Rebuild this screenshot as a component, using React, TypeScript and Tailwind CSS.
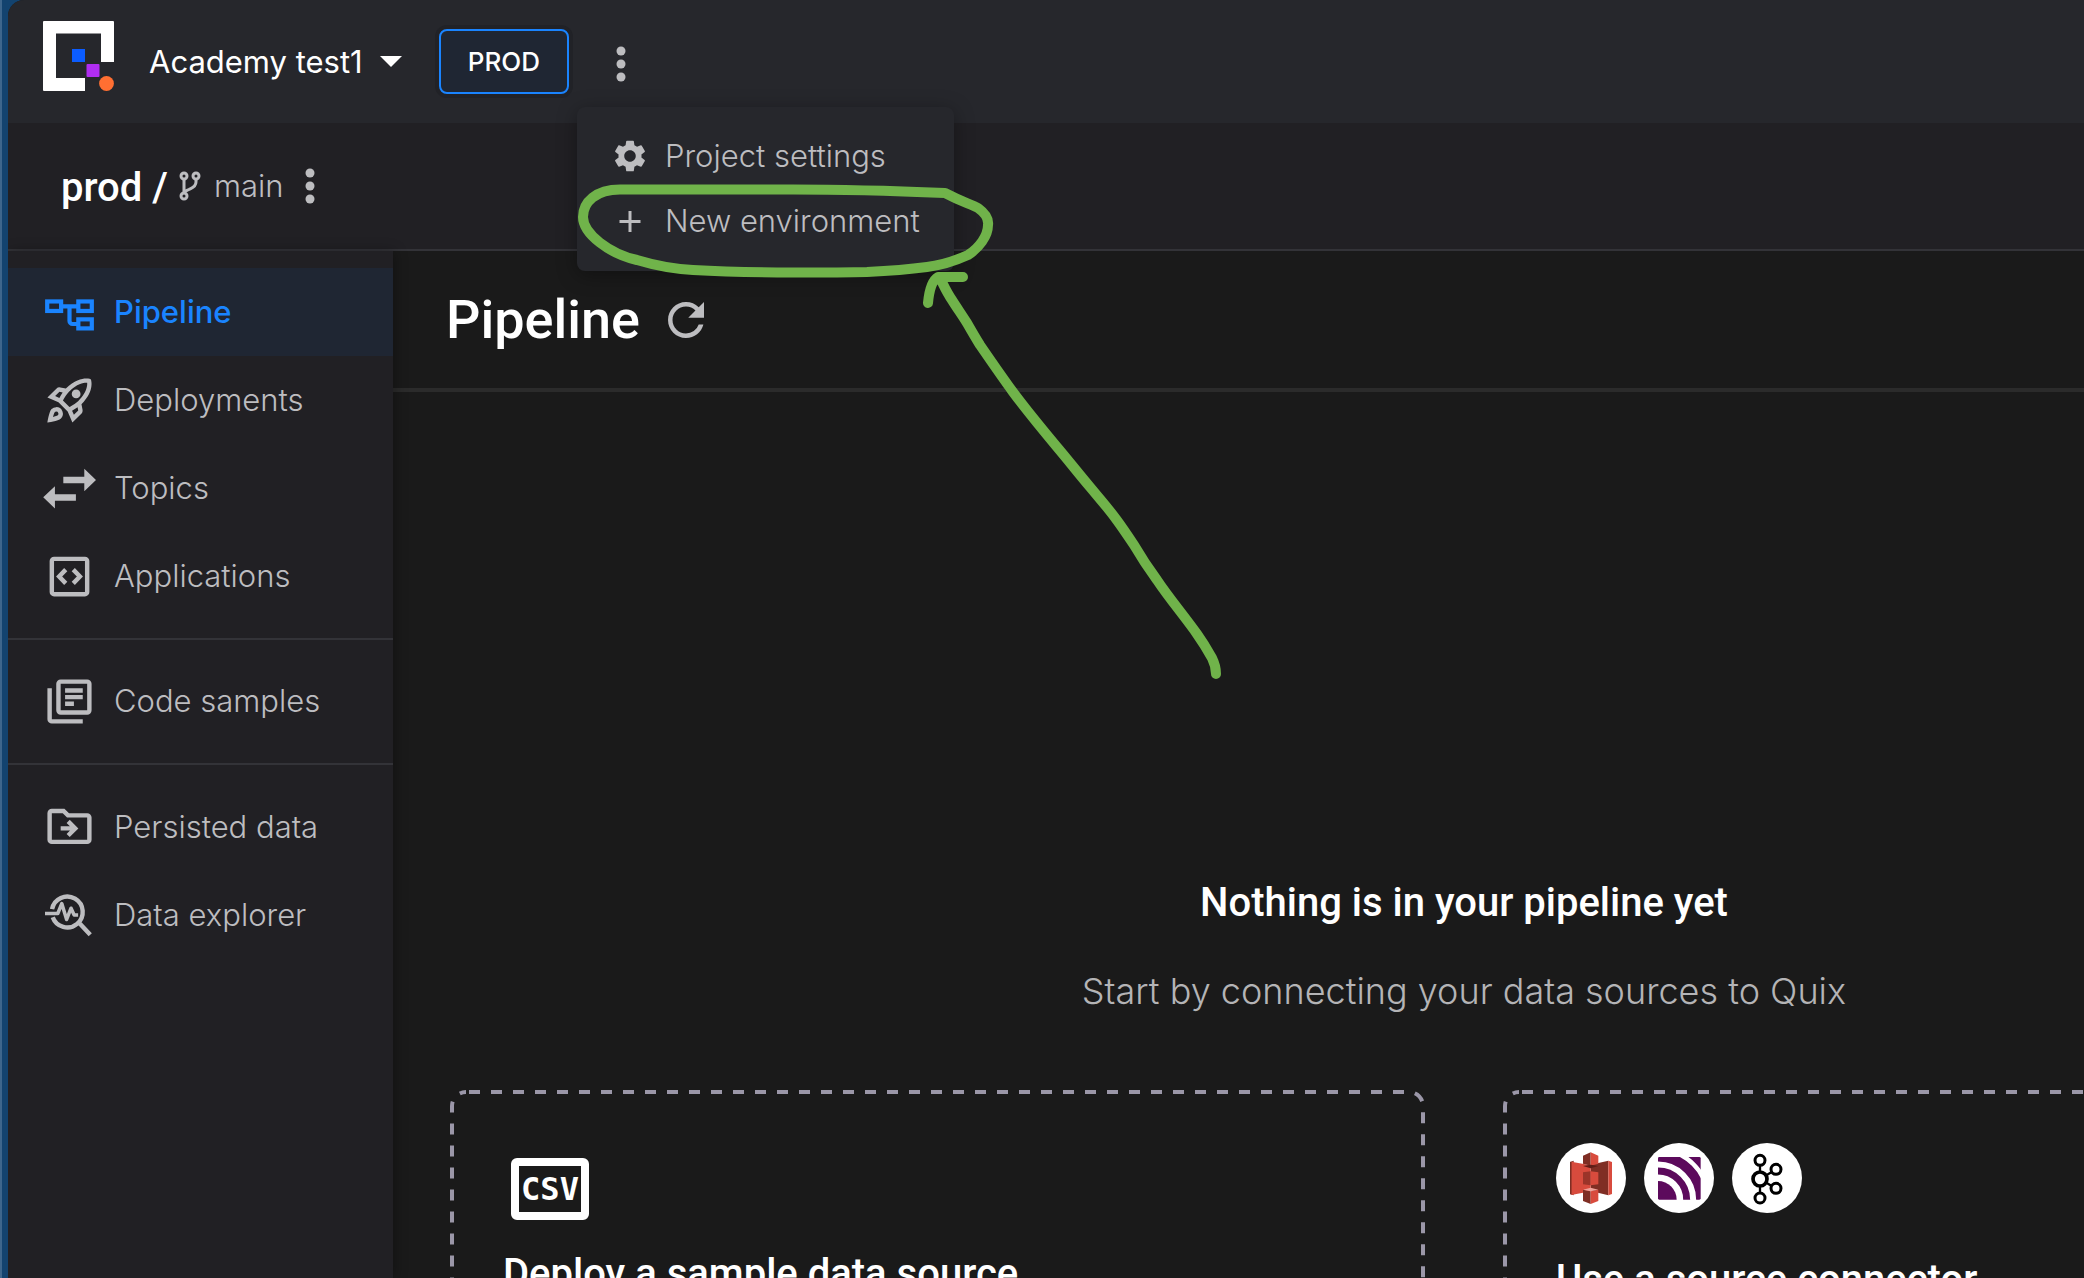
import type { ReactNode } from "react";

function Logo() {
  return (
    <svg viewBox="0 0 71 70" className="mb-[11px] h-[70px] w-[71px] shrink-0" role="img" aria-label="Quix">
      <path
        fill="#fff"
        d="M1 0H70a1 1 0 0 1 1 1V41H58V12.5H13V57H42V70H1a1 1 0 0 1-1-1V1a1 1 0 0 1 1-1z"
      />
      <rect x="29" y="28" width="13" height="13" fill="#0b5cff" />
      <rect x="43.5" y="43" width="13" height="13" rx="1" fill="#b02df2" />
      <circle cx="63.5" cy="62.5" r="7.4" fill="#ff6f32" />
    </svg>
  );
}

function Kebab() {
  return (
    <svg viewBox="0 0 10 36" className="h-9 w-2.5" fill="#bdbdc0" aria-hidden="true">
      <circle cx="5" cy="5" r="4.5" />
      <circle cx="5" cy="18" r="4.5" />
      <circle cx="5" cy="31" r="4.5" />
    </svg>
  );
}

function Icon({ children }: { children: ReactNode }) {
  return (
    <svg viewBox="0 0 24 24" className="size-[53px] shrink-0" fill="none" stroke="currentColor" strokeWidth="2" aria-hidden="true">
      {children}
    </svg>
  );
}

const icons = {
  pipeline: (
    <Icon>
      <g strokeWidth="1.9">
        <rect x="1.9" y="7" width="6.3" height="4.3" />
        <rect x="16" y="7" width="6.1" height="4.3" />
        <rect x="16" y="15.1" width="6.1" height="4.1" />
        <path d="M8.5 9.2H16M12 9.2v6.6a1.4 1.4 0 0 0 1.4 1.4H16" />
      </g>
    </Icon>
  ),
  rocket: (
    <Icon>
      <path
        fill="currentColor"
        stroke="none"
        fillRule="evenodd"
        d="M6 15c-.83 0-1.58.34-2.12.88C2.7 17.06 2 22 2 22s4.94-.7 6.12-1.88A2.996 2.996 0 0 0 6 15zm.71 3.71c-.28.28-2.17.76-2.17.76s.47-1.88.76-2.17c.17-.19.42-.3.7-.3a1.003 1.003 0 0 1 .71 1.71zM17.42 13.65c6.36-6.36 4.24-11.31 4.24-11.31S16.71.22 10.35 6.58l-2.49-.5a2.03 2.03 0 0 0-1.81.55L2 10.69l5 2.14L11.17 17l2.14 5 4.05-4.05c.47-.47.68-1.15.55-1.81l-.49-2.49zM7.41 10.83l-1.91-.82 1.97-1.97 1.44.29c-.57.83-1.08 1.7-1.5 2.5zm6.58 7.67-.82-1.91c.8-.42 1.67-.93 2.49-1.5l.29 1.44-1.96 1.97zM16 12.24c-1.32 1.32-3.38 2.4-4.04 2.73l-2.93-2.93c.32-.65 1.4-2.71 2.73-4.04 4.68-4.68 8.23-3.99 8.23-3.99s.69 3.55-3.99 8.23zM15 11c1.1 0 2-.9 2-2s-.9-2-2-2-2 .9-2 2 .9 2 2 2z"
      />
    </Icon>
  ),
  topics: (
    <Icon>
      <g fill="currentColor" stroke="none">
        <path d="M9.2 6.7h9.5V3.1L24 8.15l-5.3 5.05V9.6H9.2z" />
        <path d="M14.9 14.6H5.4V11L.1 16l5.3 5.1v-3.6h9.5z" />
      </g>
    </Icon>
  ),
  apps: (
    <Icon>
      <rect x="4" y="4" width="16" height="16" rx="1" />
      <path d="M10.3 8.9L7.3 12l3 3.1M13.7 8.9l3 3.1-3 3.1" />
    </Icon>
  ),
  library: (
    <Icon>
      <path d="M3 6v14a1 1 0 0 0 1 1h14" />
      <rect x="7" y="3" width="14" height="14" rx="1" />
      <path d="M10 7h8M10 10h8M10 13h4" />
    </Icon>
  ),
  folder: (
    <Icon>
      <path d="M3 17.5V5.5a1 1 0 0 1 1-1h5.3l2 2H20a1 1 0 0 1 1 1v10a1 1 0 0 1-1 1H4a1 1 0 0 1-1-1z" />
      <path d="M8 12.4h6M11.4 9.2l3.2 3.2-3.2 3.2" />
    </Icon>
  ),
  explorer: (
    <Icon>
      <path d="M4.1 9.1a7 7 0 1 1 .3 3.7M16.2 15.2l5.2 5.5" />
      <path strokeWidth="1.6" strokeLinejoin="round" d="M.9 11.1h5.8L8.5 6.6l2.2 7.2 2-5.1 1.4 3.1h1.8" />
    </Icon>
  ),
};

function NavItem({ icon, label, active = false }: { icon: ReactNode; label: string; active?: boolean }) {
  return (
    <li>
      <a
        href="#"
        aria-current={active ? "page" : undefined}
        className={
          active
            ? "flex h-[88px] items-center gap-[18px] bg-[#1f2633] px-[35px] font-medium text-[#1a84ff]"
            : "flex h-[88px] items-center gap-[18px] px-[35px] font-light text-[#bdbdc0]"
        }
      >
        {icon}
        <span className="whitespace-nowrap">{label}</span>
      </a>
    </li>
  );
}

function S3Logo() {
  return (
    <svg viewBox="0 0 210 210" className="size-full" role="img" aria-label="Amazon S3">
      <path fill="#7f2e24" d="M42 57l11-4v104l-11-4zM104 65l53-12v104l-53-13z" />
      <path fill="#d84b3d" d="M46 56l58 11v78l-58 11zM157 53l11 4v96l-11 4z" />
      <path fill="#7f2e24" d="M42 57l4-1v99l-4-2zM81 38l23-10v40l-23-6z" />
      <path fill="#d84b3d" d="M104 28l23 10v24l-23 6z" />
      <path fill="#5f1d17" d="M81 69l23-4 23 4-23 7z" />
      <path fill="#9b3429" d="M81 88l23-3v42l-23-3z" />
      <path fill="#d84b3d" d="M104 85l23 3v36l-23 3z" />
      <path fill="#7f2e24" d="M81 140l23 5v38l-23-9z" />
      <path fill="#d84b3d" d="M104 145l23-5v34l-23 9z" />
      <path fill="#f0a39b" d="M81 140l23-6 23 6-23 5z" />
    </svg>
  );
}

function MqttLogo() {
  return (
    <svg viewBox="0 0 210 210" className="size-full" role="img" aria-label="MQTT">
      <defs>
        <clipPath id="mqtt-square">
          <rect x="42" y="42" width="128" height="128" rx="4" />
        </clipPath>
      </defs>
      <g clipPath="url(#mqtt-square)" fill="none" stroke="#5c0a5c">
        <circle cx="42" cy="170" r="56" fill="#5c0a5c" stroke="none" />
        <circle cx="42" cy="170" r="86" strokeWidth="21" />
        <circle cx="42" cy="170" r="129" strokeWidth="29" />
        <circle cx="42" cy="170" r="177" strokeWidth="40" />
      </g>
    </svg>
  );
}

function KafkaLogo() {
  return (
    <svg viewBox="0 0 210 210" className="size-full" fill="none" stroke="#000" strokeWidth="9" role="img" aria-label="Apache Kafka">
      <path strokeWidth="7" d="M84 67v20M84 130v20M103 97l15-9M103 119l15 9" />
      <circle cx="84" cy="52" r="15" />
      <circle cx="84" cy="165" r="15" />
      <circle cx="132" cy="79" r="15" />
      <circle cx="132" cy="136" r="15" />
      <circle cx="84" cy="108" r="21" strokeWidth="11" />
    </svg>
  );
}

function DashedOutline() {
  return (
    <svg className="pointer-events-none absolute inset-0 size-full" fill="none" aria-hidden="true">
      <rect
        x="2"
        y="2"
        rx="14"
        className="h-[calc(100%-4px)] w-[calc(100%-4px)]"
        stroke="#9b97a8"
        strokeWidth="4"
        strokeDasharray="11 11"
        strokeDashoffset="-3"
      />
    </svg>
  );
}

function Annotation() {
  return (
    <svg
      viewBox="0 0 660 500"
      className="pointer-events-none absolute left-[576px] top-[180px] z-30 h-[500px] w-[660px]"
      fill="none"
      stroke="#70b34a"
      strokeWidth="10"
      strokeLinecap="round"
      strokeLinejoin="round"
      aria-hidden="true"
    >
      <path d="M369 13C320 11 270 9.500 217 9.500H44C20 9.500 7 22 7 37C7 54 34 74 61 80C81 86 98 89 117 90C150 92 185 92.500 217 92.500C245 92.500 268 92.500 291 92C312 91 332 89.500 351 87C367 85 381 80 392 75C403 68 412 56 412 45C413 38 409 33 402 28C395 24 386 22 369 13Z" />
      <path d="M352 123C353 112 355 101 362 97H387M364 98C368 106 371 113 376 120C381 128 386 135 391 143C395 150 399 157 404 165C415 181 426 197 437 212C451 231 466 249 481 267C492 280 503 294 514 307C524 319 532 328 540 339C546 347 552 356 558 365C565 377 573 389 581 400C593 418 609 437 621 454C626 461 631 469 636 478C639 484 640 489 640 494" />
    </svg>
  );
}

export default function App() {
  return (
    <div className="h-screen overflow-hidden border-l-2 border-[#3e668c] bg-[#13436f] pl-1.5 font-['Inter',sans-serif] text-[31px] leading-10">
      <div className="flex h-full flex-col overflow-hidden rounded-tl-2xl bg-[#1a1a1a]">
        <header className="flex h-[123px] shrink-0 items-center bg-[#26272c] pl-[35px]">
          <Logo />
          <button type="button" className="ml-[35px] flex items-center gap-[17px] whitespace-nowrap text-white">
            Academy test1
            <svg viewBox="0 0 22 11" className="h-[11px] w-[22px]" fill="#fff" aria-hidden="true">
              <path d="M0 0h22L11 11z" />
            </svg>
          </button>
          <button
            type="button"
            className="ml-[37px] h-[65px] rounded-lg border-2 border-[#1a84ff] bg-[#1f2633] px-[27px] text-[26px] font-medium text-white ring-4 ring-[#212227]"
          >
            PROD
          </button>
          <div className="relative ml-[47px] flex items-center">
            <button type="button" aria-label="Project menu" aria-expanded="true" className="pt-1">
              <Kebab />
            </button>
            <div
              role="menu"
              className="absolute -left-[39px] top-[65px] z-20 w-[377px] rounded-lg bg-[#26272c] py-[17px] font-light text-[#bdbdc0] shadow-[0_4px_20px_rgba(0,0,0,0.35)]"
            >
              <button type="button" role="menuitem" className="flex h-[65px] w-full items-center gap-[19px] whitespace-nowrap pl-[37px]">
                <svg viewBox="2 2 20 20" className="size-8" fill="currentColor" aria-hidden="true">
                  <path d="M19.140 12.940c.04-.3.060-.610.060-.940s-.020-.640-.070-.940l2.030-1.580a.49.49 0 0 0 .12-.61l-1.920-3.320a.488.488 0 0 0-.59-.22l-2.390.96c-.5-.38-1.030-.7-1.620-.94l-.36-2.540a.484.484 0 0 0-.48-.41h-3.840c-.24 0-.43.170-.47.410l-.36 2.540c-.59.240-1.130.57-1.620.940l-2.390-.96c-.22-.080-.47 0-.59.220L2.740 8.870c-.12.210-.080.470.12.610l2.030 1.580c-.05.300-.09.630-.09.940s.020.640.070.940l-2.030 1.580a.49.49 0 0 0-.12.610l1.920 3.320c.12.220.37.290.59.220l2.390-.96c.5.380 1.030.7 1.620.940l.36 2.540c.05.240.24.410.48.410h3.840c.24 0 .44-.17.47-.41l.36-2.54c.59-.24 1.130-.56 1.620-.94l2.390.96c.22.080.47 0 .59-.22l1.920-3.320c.12-.22.070-.47-.12-.61l-2.010-1.580zM12 15.600c-1.980 0-3.600-1.620-3.600-3.600s1.620-3.600 3.600-3.600 3.600 1.620 3.600 3.600-1.620 3.600-3.600 3.600z" />
                </svg>
                Project settings
              </button>
              <button type="button" role="menuitem" className="flex h-[65px] w-full items-center gap-[19px] whitespace-nowrap pl-[37px]">
                <svg viewBox="0 0 32 32" className="size-8" stroke="currentColor" strokeWidth="3" aria-hidden="true">
                  <path d="M16 6v21M5.500 16.500h21" />
                </svg>
                New environment
              </button>
            </div>
          </div>
        </header>

        <div className="flex h-32 shrink-0 items-center border-b-2 border-[#333338] bg-[#212024] pl-[53px]">
          <h2 className="whitespace-nowrap pt-1 font-['Roboto',sans-serif] text-[40px] font-medium text-white">prod /</h2>
          <svg viewBox="0 0 22 30" className="ml-[11px] h-[30px] w-[22px]" fill="none" stroke="#bdbdc0" strokeWidth="3" aria-hidden="true">
            <circle cx="5" cy="5" r="3" />
            <circle cx="17" cy="5" r="3" />
            <circle cx="5" cy="25" r="3" />
            <path d="M5 8v14M17 8v3c0 5-4 6-7 7.500s-5 2-5 4" />
          </svg>
          <span className="ml-[13px] font-light text-[#bdbdc0]">main</span>
          <button type="button" aria-label="Branch menu" className="ml-[22px]">
            <Kebab />
          </button>
        </div>

        <div className="flex min-h-0 flex-1">
          <nav className="z-10 w-[385px] shrink-0 bg-[#212024] shadow-[2px_0_12px_rgba(0,0,0,0.3)]">
            <ul className="border-b-2 border-[#333338] pb-[18px] pt-[17px]">
              <NavItem icon={icons.pipeline} label="Pipeline" active />
              <NavItem icon={icons.rocket} label="Deployments" />
              <NavItem icon={icons.topics} label="Topics" />
              <NavItem icon={icons.apps} label="Applications" />
            </ul>
            <ul className="border-b-2 border-[#333338] pb-[18px] pt-[17px]">
              <NavItem icon={icons.library} label="Code samples" />
            </ul>
            <ul className="pt-[18px]">
              <NavItem icon={icons.folder} label="Persisted data" />
              <NavItem icon={icons.explorer} label="Data explorer" />
            </ul>
          </nav>

          <main className="min-w-0 flex-1 overflow-hidden">
            <div className="flex h-[141px] items-center gap-7 border-b-4 border-[#2b2b2b] pl-[53px]">
              <h1 className="font-['Roboto',sans-serif] text-[54px] font-medium leading-[64px] text-white">Pipeline</h1>
              <button type="button" aria-label="Refresh">
                <svg viewBox="4 4 16 16" className="size-9" fill="#bdbdc0" aria-hidden="true">
                  <path d="M17.650 6.350A7.958 7.958 0 0 0 12 4c-4.420 0-7.990 3.580-7.990 8s3.570 8 7.990 8c3.730 0 6.840-2.550 7.730-6h-2.080A5.990 5.990 0 0 1 12 18c-3.310 0-6-2.690-6-6s2.690-6 6-6c1.660 0 3.140.690 4.220 1.780L13 11h7V4l-2.350 2.350z" />
                </svg>
              </button>
            </div>

            <section className="-mr-[451px] px-[57px] pt-[487px]">
              <div className="text-center">
                <h2 className="font-['Roboto',sans-serif] text-[40px] font-medium leading-[48px] text-white">
                  Nothing is in your pipeline yet
                </h2>
                <p className="mt-10 text-[36px] font-light leading-[48px] text-[#b4b4b6]">
                  Start by connecting your data sources to Quix
                </p>
              </div>

              <div className="mt-[75px] grid grid-cols-2 gap-[78px]">
                <article className="relative h-[425px] px-[53px] pt-[68px]">
                  <DashedOutline />
                  <div className="ml-2 flex h-[62px] w-[78px] items-center justify-center rounded-md border-8 border-white font-['DejaVu_Sans_Mono',monospace] text-[32px] font-bold leading-none text-white">
                    CSV
                  </div>
                  <h3 className="mt-[30px] font-['Roboto',sans-serif] text-[40px] font-medium leading-[48px] text-white">
                    Deploy a sample data source
                  </h3>
                </article>
                <article className="relative h-[425px] px-[53px] pt-[53px]">
                  <DashedOutline />
                  <div className="flex gap-[18px]">
                    <span className="size-[70px] overflow-hidden rounded-full bg-white"><S3Logo /></span>
                    <span className="size-[70px] overflow-hidden rounded-full bg-white"><MqttLogo /></span>
                    <span className="size-[70px] overflow-hidden rounded-full bg-white"><KafkaLogo /></span>
                  </div>
                  <h3 className="mt-[43px] font-['Roboto',sans-serif] text-[40px] font-medium leading-[48px] text-white">
                    Use a source connector
                  </h3>
                </article>
              </div>
            </section>
          </main>
        </div>
      </div>
      <Annotation />
    </div>
  );
}
